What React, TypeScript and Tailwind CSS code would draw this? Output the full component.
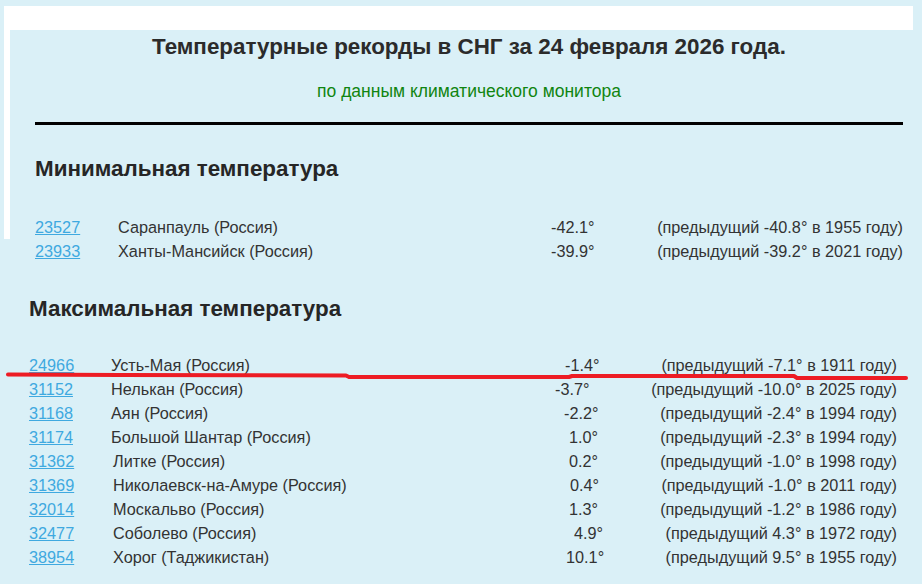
import React from 'react'

type Row = {
  id: string
  name: string
  temp: string
  prev: string
  linkW: string
  nameW: string
}

const minRows: Row[] = [
  { id: '23527', name: 'Саранпауль (Россия)', temp: '-42.1°', prev: '(предыдущий -40.8° в 1955 году)', linkW: 'w-[83px]', nameW: 'w-[433px]' },
  { id: '23933', name: 'Ханты-Мансийск (Россия)', temp: '-39.9°', prev: '(предыдущий -39.2° в 2021 году)', linkW: 'w-[83px]', nameW: 'w-[433px]' },
]

const maxRows: Row[] = [
  { id: '24966', name: 'Усть-Мая (Россия)', temp: '-1.4°', prev: '(предыдущий -7.1° в 1911 году)', linkW: 'w-[82px]', nameW: 'w-[454px]' },
  { id: '31152', name: 'Нелькан (Россия)', temp: '-3.7°', prev: '(предыдущий -10.0° в 2025 году)', linkW: 'w-[82px]', nameW: 'w-[444px]' },
  { id: '31168', name: 'Аян (Россия)', temp: '-2.2°', prev: '(предыдущий -2.4° в 1994 году)', linkW: 'w-[82px]', nameW: 'w-[453px]' },
  { id: '31174', name: 'Большой Шантар (Россия)', temp: '1.0°', prev: '(предыдущий -2.3° в 1994 году)', linkW: 'w-[82px]', nameW: 'w-[458px]' },
  { id: '31362', name: 'Литке (Россия)', temp: '0.2°', prev: '(предыдущий -1.0° в 1998 году)', linkW: 'w-[84px]', nameW: 'w-[456px]' },
  { id: '31369', name: 'Николаевск-на-Амуре (Россия)', temp: '0.4°', prev: '(предыдущий -1.0° в 2011 году)', linkW: 'w-[84px]', nameW: 'w-[457px]' },
  { id: '32014', name: 'Москальво (Россия)', temp: '1.3°', prev: '(предыдущий -1.2° в 1986 году)', linkW: 'w-[84px]', nameW: 'w-[456px]' },
  { id: '32477', name: 'Соболево (Россия)', temp: '4.9°', prev: '(предыдущий 4.3° в 1972 году)', linkW: 'w-[84px]', nameW: 'w-[461px]' },
  { id: '38954', name: 'Хорог (Таджикистан)', temp: '10.1°', prev: '(предыдущий 9.5° в 1955 году)', linkW: 'w-[84px]', nameW: 'w-[453px]' },
]

function RecordRow({ row }: { row: Row }) {
  return (
    <div className="flex h-6 items-center whitespace-nowrap text-[16.25px] leading-6 text-[#333]">
      <a href="#" className={`${row.linkW} shrink-0 text-[#3fa9e0] underline`}>
        {row.id}
      </a>
      <span className={`${row.nameW} shrink-0`}>{row.name}</span>
      <span className="shrink-0">{row.temp}</span>
      <span className="flex-1 text-right">{row.prev}</span>
    </div>
  )
}

export default function App() {
  return (
    <div className="relative h-[584px] w-[922px] overflow-hidden bg-[#daf0f7] font-['Liberation_Sans',Arial,sans-serif]">
      {/* верхний кусок скриншота в белой рамке */}
      <div className="pl-[4px] pt-[6px]">
        <div className="w-[909px] bg-white pl-[6px] pt-[24px]">
          <div className="bg-[#daf0f7] pl-[25px] pr-[10px] pt-[4px]">
            <div className="w-[868px]">
              <h1 className="text-center text-[22.4px] font-bold leading-[26px] text-[#2b2b2b]">
                Температурные рекорды в СНГ за 24 февраля 2026 года.
              </h1>
              <p className="mt-[20px] text-center text-[17.5px] leading-[22px] text-[#108510]">
                по данным климатического монитора
              </p>
              <div className="mt-[20px] h-[3px] bg-black" />
              <h2 className="mt-[31px] text-[22.4px] font-bold leading-[26px] text-[#262626]">
                Минимальная температура
              </h2>
              <div className="mt-[33px]">
                <RecordRow row={minRows[0]} />
              </div>
            </div>
          </div>
        </div>
      </div>
      <div className="pl-[35px]">
        <div className="w-[868px]">
          <RecordRow row={minRows[1]} />
        </div>
      </div>

      {/* нижний кусок, сдвинут влево */}
      <div className="pl-[29px]">
        <div className="w-[868px]">
          <h2 className="mt-[33px] text-[22.4px] font-bold leading-[26px] text-[#262626]">
            Максимальная температура
          </h2>
          <div className="mt-[31px]">
            {maxRows.map((row) => (
              <RecordRow key={row.id} row={row} />
            ))}
          </div>
        </div>
      </div>

      {/* красная линия от руки */}
      <svg
        className="pointer-events-none absolute left-0 top-0"
        width="922"
        height="584"
        viewBox="0 0 922 584"
      >
        <path
          d="M8 374.5 L120 375 L346 375.5 L349 377 L569 377 L572 376 L794 376 L797 378 L906 378"
          fill="none"
          stroke="#ed1c24"
          strokeWidth="4"
          strokeLinecap="round"
          strokeLinejoin="round"
        />
      </svg>
    </div>
  )
}
